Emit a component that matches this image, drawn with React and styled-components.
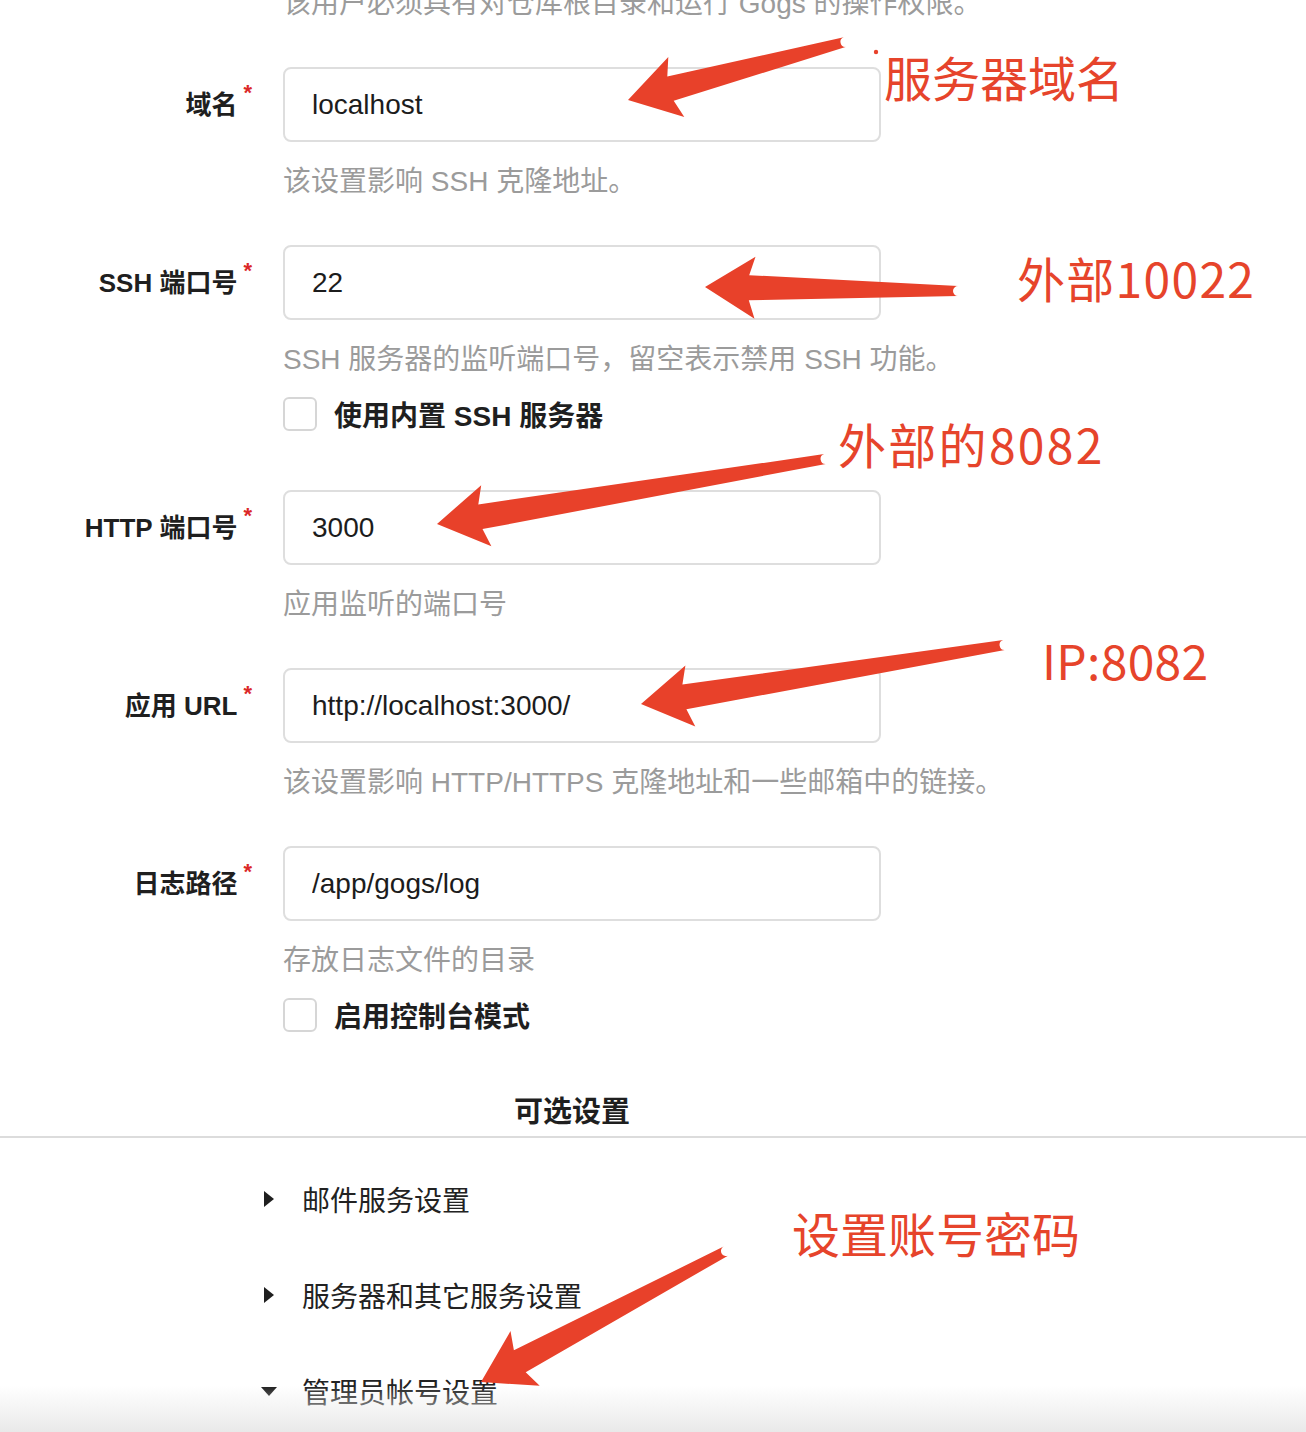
import React from "react";
import styled, { createGlobalStyle } from "styled-components";

const GlobalStyle = createGlobalStyle`
  html, body {
    margin: 0;
    padding: 0;
    background: #ffffff;
    overflow: hidden;
  }
  body {
    font-family: "Liberation Sans", "Noto Sans CJK SC", sans-serif;
    color: #222222;
  }
`;

const fields = [
  {
    label: "域名",
    value: "localhost",
    help: "该设置影响 SSH 克隆地址。",
  },
  {
    label: "SSH 端口号",
    value: "22",
    help: "SSH 服务器的监听端口号，留空表示禁用 SSH 功能。",
    check: "使用内置 SSH 服务器",
  },
  {
    label: "HTTP 端口号",
    value: "3000",
    help: "应用监听的端口号",
  },
  {
    label: "应用 URL",
    value: "http://localhost:3000/",
    help: "该设置影响 HTTP/HTTPS 克隆地址和一些邮箱中的链接。",
  },
  {
    label: "日志路径",
    value: "/app/gogs/log",
    help: "存放日志文件的目录",
    check: "启用控制台模式",
  },
];

const sections = [
  { title: "邮件服务设置", open: false },
  { title: "服务器和其它服务设置", open: false },
  { title: "管理员帐号设置", open: true },
];

const notes = [
  { text: "服务器域名", x: 884, y: 52, spacing: 0 },
  { text: "外部10022", x: 1017, y: 253, spacing: 1.3 },
  { text: "外部的8082", x: 838, y: 419, spacing: 2.3 },
  { text: "IP:8082", x: 1042, y: 635, spacing: 0.3 },
  { text: "设置账号密码", x: 792, y: 1208, spacing: 0 },
];

const arrows = [
  { tail: [845, 42], tip: [628, 100] },
  { tail: [958, 291], tip: [705, 287] },
  { tail: [825, 459], tip: [437, 524] },
  { tail: [1004, 645], tip: [641, 704] },
  { tail: [726, 1251], tip: [481, 1382] },
];

// builds a tapered arrow outline (shaft thin at the tail, barbed head at the tip)
const arrowPath = ({ tail, tip }) => {
  const dx = tail[0] - tip[0];
  const dy = tail[1] - tip[1];
  const len = Math.hypot(dx, dy);
  const u = [dx / len, dy / len];
  const n = [-u[1], u[0]];
  const L = 50;
  const W = 31;
  const N = 44;
  const wn = 12.5;
  const wt = 5;
  const p = (base, a, b) => [
    base[0] + u[0] * a + n[0] * b,
    base[1] + u[1] * a + n[1] * b,
  ];
  const pts = [tip, p(tip, L, W), p(tip, N, wn), p(tail, 0, wt)];
  const back = [p(tail, 0, -wt), p(tip, N, -wn), p(tip, L, -W)];
  const f = (q) => `${q[0].toFixed(1)} ${q[1].toFixed(1)}`;
  return (
    `M ${pts.map(f).join(" L ")} ` +
    `A ${wt} ${wt} 0 0 1 ${f(back[0])} ` +
    `L ${back.slice(1).map(f).join(" L ")} Z`
  );
};

const App = () => {
  return (
    <Page>
      <GlobalStyle />
      <Form>
        <Field first>
          <Control>
            <Help>该用户必须具有对仓库根目录和运行 Gogs 的操作权限。</Help>
          </Control>
        </Field>
        {fields.map((f, i) => (
          <Field key={i} tall={!!f.check}>
            <Label>
              {f.label}
              <Star>*</Star>
            </Label>
            <Control>
              <Input readOnly value={f.value} />
              <Help>{f.help}</Help>
              {f.check && (
                <CheckRow>
                  <Box />
                  <CheckText>{f.check}</CheckText>
                </CheckRow>
              )}
            </Control>
          </Field>
        ))}
      </Form>

      <Heading>可选设置</Heading>

      <Sections>
        {sections.map((s, i) => (
          <Section key={i}>
            <CaretBox>
              <Caret open={s.open} />
            </CaretBox>
            <SectionTitle>{s.title}</SectionTitle>
          </Section>
        ))}
      </Sections>

      <Marks width="1306" height="1432" viewBox="0 0 1306 1432">
        {arrows.map((a, i) => (
          <path key={i} d={arrowPath(a)} fill="#e8412a" />
        ))}
        <circle cx="876" cy="52" r="2.2" fill="#e8412a" />
      </Marks>
      {notes.map((n, i) => (
        <Note key={i} spacing={n.spacing} style={{ left: n.x, top: n.y }}>
          {n.text}
        </Note>
      ))}
      <Fade />
    </Page>
  );
};

const Page = styled.div`
  position: relative;
  width: 1306px;
  height: 1432px;
  overflow: hidden;
`;

const Form = styled.div`
  display: flex;
  flex-direction: column;
`;

const Field = styled.div`
  display: grid;
  grid-template-columns: 252px 598px;
  column-gap: 31px;
  align-items: start;
  margin-top: ${(props) => (props.first ? "-15px" : "0")};
  margin-bottom: ${(props) => (props.tall ? "58px" : "44px")};
  &:last-child {
    margin-bottom: 0;
  }
`;

const Label = styled.div`
  grid-column: 1;
  height: 70px;
  display: flex;
  align-items: center;
  justify-content: flex-end;
  font-size: 26px;
  font-weight: 700;
  color: #1f1f1f;
  white-space: nowrap;
`;

const Star = styled.span`
  color: #db2828;
  font-size: 22px;
  margin-left: 6px;
  position: relative;
  top: -9px;
`;

const Control = styled.div`
  grid-column: 2;
  display: flex;
  flex-direction: column;
`;

const Input = styled.input`
  box-sizing: border-box;
  width: 598px;
  height: 75px;
  padding: 0 27px;
  border: 2px solid #dedede;
  border-radius: 8px;
  font-family: "Liberation Sans", "Noto Sans CJK SC", sans-serif;
  font-size: 28px;
  color: #1c1c1c;
  background: #ffffff;
  outline: none;
`;

const Help = styled.div`
  margin-top: 21px;
  font-size: 28px;
  line-height: 38px;
  color: #9b9b9b;
  white-space: nowrap;
  ${Field}:first-child & {
    margin-top: 0;
  }
`;

const CheckRow = styled.div`
  display: flex;
  align-items: center;
  gap: 17px;
  margin-top: 17px;
  height: 36px;
`;

const Box = styled.div`
  box-sizing: border-box;
  width: 34px;
  height: 34px;
  border: 2px solid #d6d6d6;
  border-radius: 6px;
  background: #ffffff;
`;

const CheckText = styled.span`
  font-size: 28px;
  font-weight: 700;
  color: #1f1f1f;
  white-space: nowrap;
`;

const Heading = styled.div`
  margin-top: 58px;
  padding-right: 162px;
  text-align: center;
  font-size: 29px;
  line-height: 42px;
  font-weight: 700;
  color: #1f1f1f;
  padding-bottom: 3px;
  border-bottom: 2px solid #dcdcdc;
`;

const Sections = styled.div`
  margin-top: 13px;
  display: flex;
  flex-direction: column;
`;

const Section = styled.div`
  height: 96px;
  display: flex;
  align-items: center;
  padding-left: 261px;
  gap: 25px;
`;

const CaretBox = styled.div`
  width: 16px;
  display: flex;
  justify-content: center;
`;

const Caret = styled.span`
  width: 0;
  height: 0;
  ${(props) =>
    props.open
      ? `border-left: 8px solid transparent;
         border-right: 8px solid transparent;
         border-top: 9px solid #1f1f1f;`
      : `border-top: 8px solid transparent;
         border-bottom: 8px solid transparent;
         border-left: 10px solid #1f1f1f;`}
`;

const SectionTitle = styled.span`
  font-size: 28px;
  color: #222222;
`;

const Marks = styled.svg`
  position: absolute;
  left: 0;
  top: 0;
  pointer-events: none;
`;

const Note = styled.div`
  position: absolute;
  font-family: "Noto Sans CJK SC", sans-serif;
  font-size: 48px;
  line-height: 48px;
  letter-spacing: ${(props) => props.spacing}px;
  color: #e6442b;
  white-space: nowrap;
`;

const Fade = styled.div`
  position: absolute;
  left: 0;
  right: 0;
  bottom: 0;
  height: 46px;
  background: linear-gradient(rgba(235, 235, 235, 0), #e9e9e9);
  pointer-events: none;
`;

export default App;
